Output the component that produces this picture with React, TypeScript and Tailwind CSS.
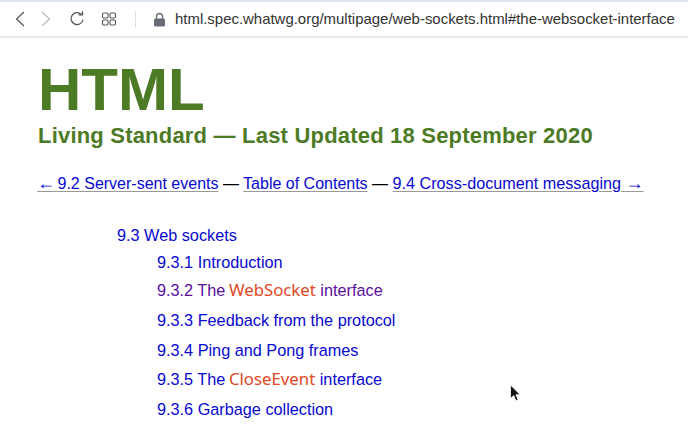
const sans = "font-['Liberation_Sans',Arial,sans-serif]";

function Toolbar() {
  return (
    <div className="flex h-[38px] items-center border-t-2 border-b-2 border-t-[#dfe5ec] border-b-[#e9e9e9] bg-white">
      <svg width="14" height="18" viewBox="0 0 14 18" fill="none" stroke="#555" strokeWidth="1.2" className="ml-[13px]">
        <path d="M11 2 3.500 9 11 16" />
      </svg>
      <svg width="14" height="18" viewBox="0 0 14 18" fill="none" stroke="#bbb" strokeWidth="1.2" className="ml-[12px]">
        <path d="M3 2 10.500 9 3 16" />
      </svg>
      <svg width="16" height="16" viewBox="0 0 16 16" fill="none" stroke="#555" strokeWidth="1.3" className="ml-[16px]">
        <path d="M12.500 3.500A6 6 0 1 0 14 8.500" />
        <path d="M9.500 3.800h4v-3.600" />
      </svg>
      <svg width="16" height="16" viewBox="0 0 16 16" fill="none" stroke="#555" strokeWidth="1.1" className="ml-[16px]">
        <rect x="1.500" y="2" width="5.500" height="5" rx="1.200" />
        <rect x="9" y="2" width="5.500" height="5" rx="1.200" />
        <rect x="1.500" y="9" width="5.500" height="5" rx="1.200" />
        <rect x="9" y="9" width="5.500" height="5" rx="1.200" />
      </svg>
      <div className="ml-[18px] h-[16px] w-px bg-[#dddddd]" />
      <svg width="13" height="15" viewBox="0 0 13 15" className="ml-[17px]">
        <path d="M3.500 7V4.500a3 3 0 0 1 6 0V7" fill="none" stroke="#666b75" strokeWidth="1.300" />
        <rect x="1" y="6.500" width="11" height="8" rx="1.500" fill="#666b75" />
      </svg>
      <span className={`ml-[9px] whitespace-nowrap text-[14.95px] text-[#333] ${sans}`}>
        html.spec.whatwg.org/multipage/web-sockets.html#the-websocket-interface
      </span>
    </div>
  );
}

function Code({ children }: { children: string }) {
  return (
    <span className="-ml-px font-['Noto_Sans',sans-serif] text-[16.8px] leading-[20px] text-[#e0481f]">{children}</span>
  );
}

const navLink = "text-[#0808d0] underline decoration-[#999] underline-offset-2";

export default function App() {
  return (
    <div className={`relative h-[427px] w-[688px] overflow-hidden bg-white ${sans}`}>
      <Toolbar />
      <div className="px-[38px]">
        <h1 className="mt-[20px] text-[60px] leading-[64px] font-bold text-[#4d7a24]">HTML</h1>
        <h2 className="mt-[1px] text-[22px] leading-[26px] font-bold tracking-[0.2px] text-[#4d7a24]">
          Living Standard — Last Updated 18 September 2020
        </h2>
        <p className="mt-[23px] -ml-px text-[16px] leading-[22px] text-black">
          <a className={navLink}>
            <span className="text-[18px] leading-[0]">←</span>
            <span className="text-[9px] leading-[0]"> </span>9.2 Server-sent events
          </a>{" "}
          — <a className={navLink}>Table of Contents</a> —{" "}
          <a className={`text-[16.2px] ${navLink}`}>
            9.4 Cross-document messaging <span className="text-[18px] leading-[0]">→</span>
          </a>
        </p>
        <div className="mt-[30px] ml-[79px] text-[16.25px] leading-[20px] text-[#0808d0]">
          <div>9.3 Web sockets</div>
          <div className="ml-[40px]">
            <div className="mt-[7px]">9.3.1 Introduction</div>
            <div className="mt-[8px] text-[#5a0f9e]">
              9.3.2 The <Code>WebSocket</Code> interface
            </div>
            <div className="mt-[10px]">9.3.3 Feedback from the protocol</div>
            <div className="mt-[10px]">9.3.4 Ping and Pong frames</div>
            <div className="mt-[9px]">
              9.3.5 The <Code>CloseEvent</Code> interface
            </div>
            <div className="mt-[10px]">9.3.6 Garbage collection</div>
          </div>
        </div>
      </div>
      <svg width="13" height="19" viewBox="0 0 13 19" className="absolute top-[384px] left-[509px]">
        <path d="M1.500 1v13.500l3.200-3 2.200 5.200 2.200-1-2.200-5h4.300z" fill="#111" stroke="#fff" strokeWidth="0.800" />
      </svg>
    </div>
  );
}
